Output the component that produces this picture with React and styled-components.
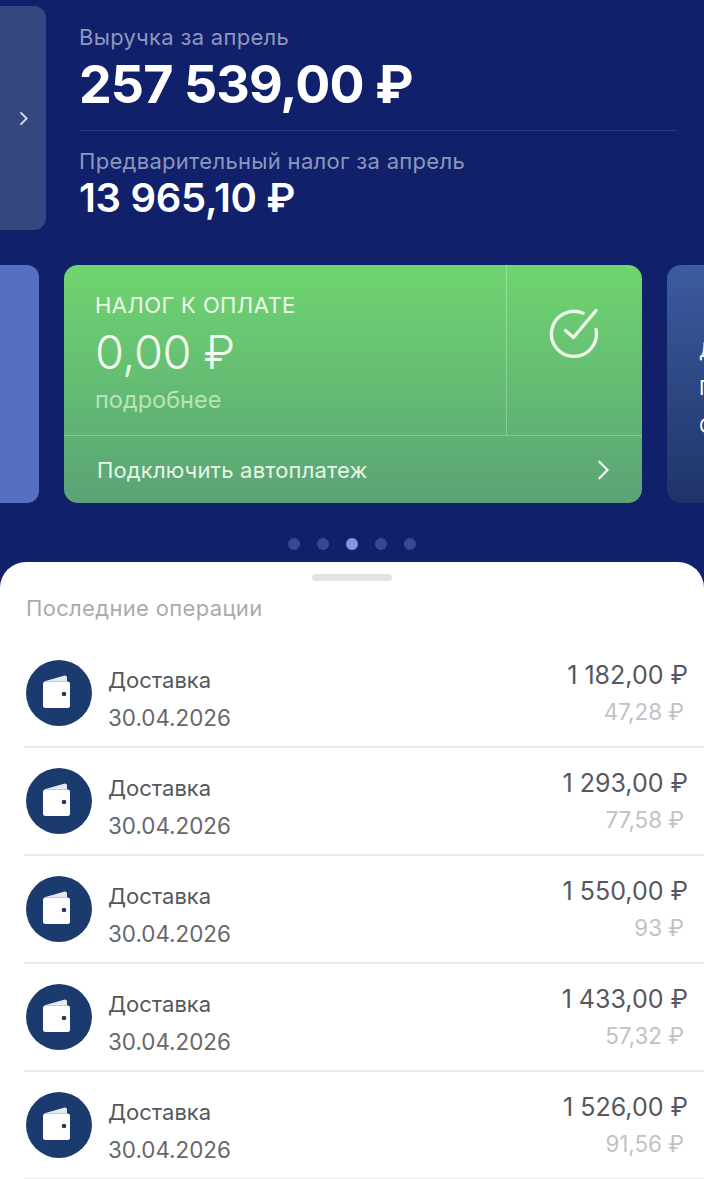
import React from "react";
import styled, { createGlobalStyle } from "styled-components";

const GlobalStyle = createGlobalStyle`
  html, body {
    margin: 0;
    padding: 0;
    background: #10206a;
  }
  * {
    box-sizing: border-box;
  }
`;

const Page = styled.div`
  width: 704px;
  height: 1179px;
  overflow: hidden;
  background: #10206a;
  font-family: Inter, "Liberation Sans", sans-serif;
`;

const Header = styled.section`
  display: flex;
  gap: 33px;
  padding-top: 6px;
  height: 265px;
`;

const SideTab = styled.div`
  width: 46px;
  height: 224px;
  flex-shrink: 0;
  display: flex;
  align-items: center;
  justify-content: center;
  background: #34487f;
  border-radius: 0 12px 12px 0;
  color: #d5dbee;
`;

const Summary = styled.div`
  width: 598px;
  padding-top: 17px;
`;

const Caption = styled.div`
  font-size: 22px;
  line-height: 28px;
  color: #8d97bd;
  letter-spacing: 0.3px;
`;

const Amount = styled.div`
  font-weight: ${(p) => (p.$big ? 700 : 600)};
  font-size: ${(p) => (p.$big ? "52px" : "40px")};
  line-height: ${(p) => (p.$big ? "58px" : "42px")};
  color: #fff;
  letter-spacing: ${(p) => (p.$big ? "-0.9px" : "-0.3px")};
  margin-top: ${(p) => (p.$big ? "5px" : "2px")};
`;

const Rule = styled.div`
  height: 1px;
  background: #2a3c80;
  margin: 16px 0 16px;
`;

const Carousel = styled.section`
  display: flex;
  gap: 25px;
  height: 238px;
  overflow: hidden;
`;

const SideCard = styled.div`
  width: 39px;
  flex-shrink: 0;
  background: #566fc0;
  border-radius: 0 12px 12px 0;
`;

const TaxCard = styled.div`
  width: 578px;
  flex-shrink: 0;
  display: flex;
  flex-direction: column;
  background: linear-gradient(180deg, #6fd56f 0%, #5aa377 100%);
  border-radius: 14px;
  overflow: hidden;
  color: #fff;
`;

const TaxTop = styled.div`
  height: 171px;
  display: flex;
  border-bottom: 1px solid rgba(255, 255, 255, 0.28);
`;

const TaxInfo = styled.div`
  flex: 1;
  padding: 27px 0 0 31px;
  border-right: 1px solid rgba(255, 255, 255, 0.28);
`;

const TaxLabel = styled.div`
  font-size: 22px;
  line-height: 26px;
  color: #eef9ea;
  letter-spacing: 0.4px;
`;

const TaxAmount = styled.div`
  font-size: 47px;
  font-weight: 300;
  line-height: 54px;
  margin-top: 7px;
  color: #f2fbef;
  letter-spacing: -0.5px;
`;

const TaxMore = styled.div`
  font-size: 23.5px;
  line-height: 28px;
  margin-top: 7px;
  color: #b9e4b8;
`;

const TaxIcon = styled.div`
  width: 135px;
  padding-top: 42px;
  display: flex;
  justify-content: center;
  align-items: flex-start;
`;

const AutoPay = styled.div`
  flex: 1;
  display: flex;
  align-items: center;
  justify-content: space-between;
  padding: 0 28px 0 33px;
  font-size: 22px;
  letter-spacing: 0.15px;
  color: #e8f5e6;
`;

const NextCard = styled.div`
  width: 200px;
  flex-shrink: 0;
  padding: 66px 0 0 32px;
  background: linear-gradient(180deg, #3c5b9e 0%, #1f3468 100%);
  border-radius: 14px;
  color: #fff;
  font-size: 20px;
  line-height: 38px;
  white-space: nowrap;
`;

const Dots = styled.div`
  display: flex;
  justify-content: center;
  gap: 17px;
  padding: 35px 0 0;
  height: 59px;
`;

const Dot = styled.span`
  width: 12px;
  height: 12px;
  border-radius: 50%;
  background: ${(p) => (p.$active ? "#7f97ea" : "#344a96")};
`;

const Sheet = styled.section`
  height: 617px;
  background: #fff;
  border-radius: 26px 26px 0 0;
  padding-top: 12px;
`;

const Handle = styled.div`
  width: 80px;
  height: 7px;
  margin: 0 auto;
  border-radius: 4px;
  background: #e2e3e5;
`;

const SheetTitle = styled.div`
  margin: 13px 0 18px 26px;
  font-size: 22px;
  line-height: 28px;
  color: #a9abaf;
  letter-spacing: 0.33px;
`;

const OpRow = styled.div`
  height: 108px;
  margin-left: 24px;
  padding: 0 16px 0 2px;
  display: flex;
  align-items: center;
  border-bottom: 2px solid #e9eaec;
`;

const OpIcon = styled.div`
  width: 66px;
  height: 66px;
  flex-shrink: 0;
  padding-right: 2px;
  border-radius: 50%;
  background: #1b3a6e;
  display: flex;
  align-items: center;
  justify-content: center;
`;

const OpText = styled.div`
  flex: 1;
  margin-left: 16px;
  padding-top: 11px;
`;

const OpName = styled.div`
  font-size: 22px;
  line-height: 38px;
  color: #55585e;
`;

const OpDate = styled.div`
  font-size: 22.4px;
  line-height: 38px;
  color: #65686d;
`;

const OpSums = styled.div`
  text-align: right;
`;

const OpSum = styled.div`
  font-size: 25px;
  line-height: 36px;
  color: #55585e;
`;

const OpTax = styled.div`
  font-size: 22.4px;
  line-height: 34px;
  margin-top: 2px;
  margin-right: 4px;
  color: #c0c2c5;
`;

const Chevron = ({ size, width = 2 }) => (
  <svg width={size} height={size} viewBox="0 0 24 24" fill="none" stroke="currentColor" strokeWidth={width} strokeLinecap="round" strokeLinejoin="round">
    <path d="M8 3l9 9-9 9" />
  </svg>
);

const CheckCircle = () => (
  <svg width="52" height="52" viewBox="0 0 52 52" fill="none" stroke="#eef9ea" strokeWidth="3.4" strokeLinecap="round" strokeLinejoin="round">
    <path d="M47 22.5A22.5 22.5 0 1 1 34 6.3" />
    <path d="M16.5 23.5l8 7L47 3.5" />
  </svg>
);

const Wallet = () => (
  <svg width="32" height="36" viewBox="0 0 32 36">
    <path d="M1.5 6.5L22 .7c1.6-.4 3 .6 3 2v3.8z" fill="#e6eaf2" />
    <rect x="1" y="6.5" width="27" height="26.5" rx="2.5" fill="#fff" />
    <circle cx="22" cy="19" r="2.3" fill="#1b3a6e" />
  </svg>
);

const operations = [
  { sum: "1 182,00 ₽", tax: "47,28 ₽" },
  { sum: "1 293,00 ₽", tax: "77,58 ₽" },
  { sum: "1 550,00 ₽", tax: "93 ₽" },
  { sum: "1 433,00 ₽", tax: "57,32 ₽" },
  { sum: "1 526,00 ₽", tax: "91,56 ₽" },
];

const App = () => (
  <Page>
    <GlobalStyle />
    <Header>
      <SideTab>
        <Chevron size={15} width={3} />
      </SideTab>
      <Summary>
        <Caption>Выручка за апрель</Caption>
        <Amount $big>257 539,00 ₽</Amount>
        <Rule />
        <Caption>Предварительный налог за апрель</Caption>
        <Amount>13 965,10 ₽</Amount>
      </Summary>
    </Header>

    <Carousel>
      <SideCard />
      <TaxCard>
        <TaxTop>
          <TaxInfo>
            <TaxLabel>НАЛОГ К ОПЛАТЕ</TaxLabel>
            <TaxAmount>0,00 ₽</TaxAmount>
            <TaxMore>подробнее</TaxMore>
          </TaxInfo>
          <TaxIcon>
            <CheckCircle />
          </TaxIcon>
        </TaxTop>
        <AutoPay>
          Подключить автоплатеж
          <Chevron size={22} width={2.6} />
        </AutoPay>
      </TaxCard>
      <NextCard>
        Д<br />П<br />С
      </NextCard>
    </Carousel>

    <Dots>
      {[0, 1, 2, 3, 4].map((i) => (
        <Dot key={i} $active={i === 2} />
      ))}
    </Dots>

    <Sheet>
      <Handle />
      <SheetTitle>Последние операции</SheetTitle>
      {operations.map((op) => (
        <OpRow key={op.sum}>
          <OpIcon>
            <Wallet />
          </OpIcon>
          <OpText>
            <OpName>Доставка</OpName>
            <OpDate>30.04.2026</OpDate>
          </OpText>
          <OpSums>
            <OpSum>{op.sum}</OpSum>
            <OpTax>{op.tax}</OpTax>
          </OpSums>
        </OpRow>
      ))}
    </Sheet>
  </Page>
);

export default App;
